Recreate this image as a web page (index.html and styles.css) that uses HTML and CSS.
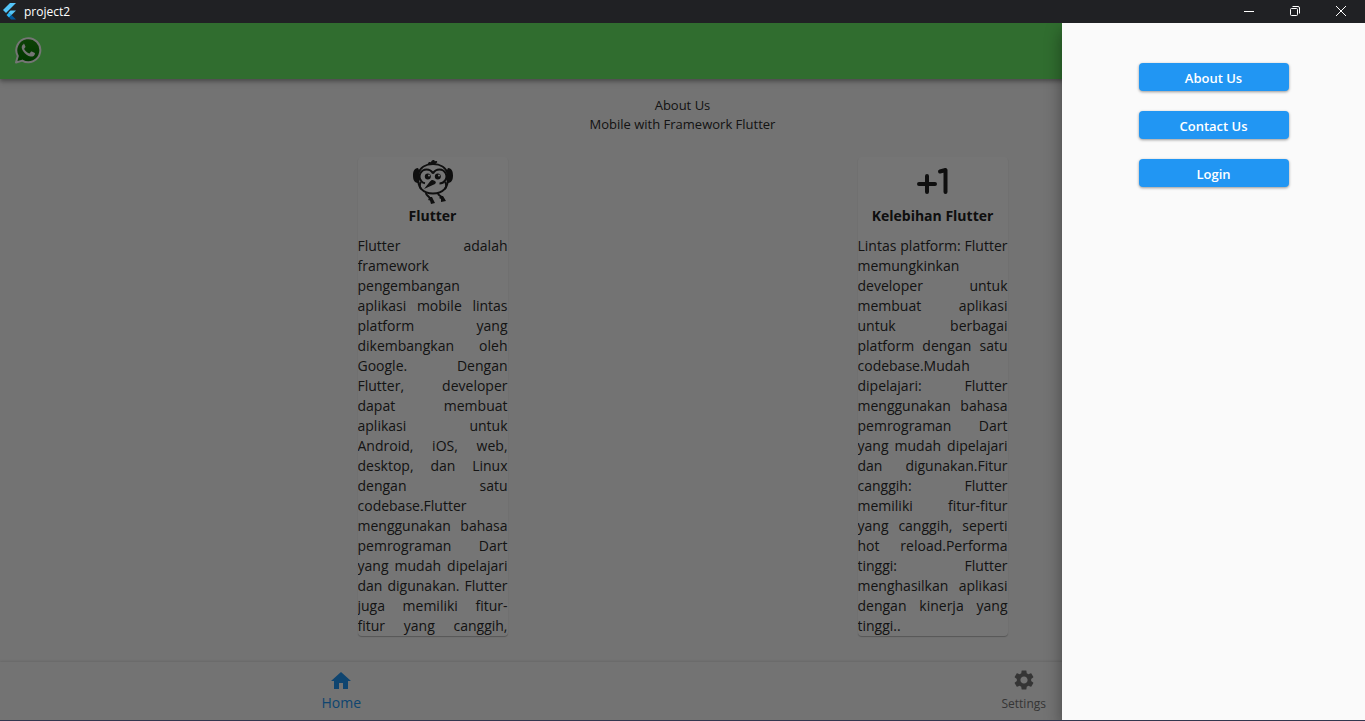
FILE: index.html
```html
<!DOCTYPE html>
<html lang="id">
<head>
<meta charset="utf-8">
<title>project2</title>
<link rel="stylesheet" href="styles.css">
</head>
<body>
<header class="titlebar">
  <svg class="titlebar-logo" viewBox="0 0 16 18" aria-hidden="true">
    <path d="M8 1h6L4 11 1 8z" fill="#54c5f8"/>
    <path d="M8.500 8.500h5.500L9.500 13 6.500 10.500z" fill="#54c5f8"/>
    <path d="M4.500 13 7 10.500 9.500 13 7 15.500z" fill="#29b6f6"/>
    <path d="M7 15.500 9.500 13 14 17.500H9z" fill="#01579b"/>
  </svg>
  <span class="titlebar-name">project2</span>
  <div class="window-controls">
    <button class="window-button" aria-label="Minimize"><svg viewBox="0 0 12 12"><path d="M1 6.500h10"/></svg></button>
    <button class="window-button" aria-label="Restore"><svg viewBox="0 0 12 12"><rect x="1.500" y="3.500" width="7" height="7" rx="1"/><path d="M3.500 1.500H9q1.500 0 1.500 1.500v5.500"/></svg></button>
    <button class="window-button" aria-label="Close"><svg viewBox="0 0 12 12"><path d="M1 1l10 10M11 1 1 11"/></svg></button>
  </div>
</header>
<div class="app">
  <div class="appbar">
    <svg class="whatsapp" viewBox="0 0 28 28" role="img" aria-label="WhatsApp">
      <defs><linearGradient id="wa" x1="0" y1="0" x2="0" y2="1"><stop offset="0" stop-color="#209010"/><stop offset="1" stop-color="#007800"/></linearGradient></defs>
      <path d="M2 26.500 3.800 20A12 12 0 1 1 8.300 24.600z" fill="url(#wa)" stroke="#fff" stroke-width="2" stroke-linejoin="round"/>
      <path d="M10.200 8c-.5 0-1.100.2-1.500.7C7 10.500 7.600 13 9.200 15.200c2 3 4.600 4.800 7.500 5.300 1.900.3 4-.8 4.200-2.600.1-.7 0-.9-.5-1.100l-2.600-1.200c-.5-.2-.8-.1-1.100.3l-1 1.300c-.3.300-.6.300-1 .1-2-.9-3.400-2.200-4.400-4-.2-.4-.1-.7.200-1l.8-1c.2-.3.200-.6.100-.9l-1.100-2.500c-.2-.4-.5-.4-1.100-.4z" fill="#fff"/>
    </svg>
  </div>
  <main class="content">
    <p class="intro">About Us<br>Mobile with Framework Flutter</p>
    <div class="cards">
      <article class="card">
        <svg class="card-icon" viewBox="0 0 48 48" aria-hidden="true">
          <g fill="none" stroke="#212121" stroke-width="2">
            <path d="M9 16C11 9.500 17 6 24 6S37 9.500 39 16"/>
            <path d="M9.500 20C8 29 14 35.500 24 35.500S40 29 38.500 20"/>
            <path d="M24 15.500c-1.500-3-4-4-6.500-4a7 7 0 0 0-5.500 11.200c1 1.500 2.500 2.300 4 2.600M24 15.500c1.500-3 4-4 6.500-4a7 7 0 0 1 5.500 11.200c-1.300 1.800-3.500 2.800-5.500 2.800"/>
            <path d="M12 24c-2 2-1 6 0 7M36 24c2 2 1 6 0 7"/>
            <path d="M17 35c0 3 3 2 4 6M29 35c0 3 3 2 4 5"/>
          </g>
          <g fill="#212121">
            <path d="M19 6c0-2 2-2.500 3-1.500 0-2 3-4 4-1 1-1 3 0 2 1l-3 2.500h-5z"/>
            <path d="M9 10C5 10 4 14 4 17.500S5 25 9 25l2-4-1-9zM39 10c4 0 5 4 5 7.500S43 25 39 25l-2-4 1-9z"/>
            <circle cx="18.800" cy="18.500" r="3"/><circle cx="28.800" cy="18.500" r="3"/>
            <path d="M25 22.500c2 1 2.500 2 1 3.500L15 31l6-7.500c1-1.500 2.500-2 4-1z"/>
            <path d="M21 39l-2 3 2 .5 1 3.500 4-1-3-6zM32 38l-2 2 2 1v3l5-1-3-5z"/>
          </g>
          <circle cx="20" cy="17.500" r="1" fill="#fff"/><circle cx="30" cy="17.500" r="1" fill="#fff"/>
        </svg>
        <h2 class="card-title">Flutter</h2>
        <p class="card-text card-text-more">Flutter adalah framework pengembangan aplikasi mobile lintas platform yang dikembangkan oleh Google. Dengan Flutter, developer dapat membuat aplikasi untuk<br>Android, iOS, web, desktop, dan Linux dengan satu codebase.Flutter menggunakan bahasa pemrograman Dart yang mudah dipelajari dan digunakan. Flutter juga memiliki fitur-<br>fitur yang canggih,</p>
      </article>
      <article class="card">
        <svg class="card-icon" viewBox="0 0 48 48" aria-hidden="true">
          <path d="M10 26h16M18 18v16M31 13.500l5.500-1.500v22" fill="none" stroke="#212121" stroke-width="4" stroke-linecap="round" stroke-linejoin="round"/>
        </svg>
        <h2 class="card-title">Kelebihan Flutter</h2>
        <p class="card-text">Lintas platform: Flutter memungkinkan developer untuk membuat aplikasi untuk berbagai platform dengan satu codebase.Mudah dipelajari: Flutter menggunakan bahasa pemrograman Dart yang mudah dipelajari dan digunakan.Fitur canggih: Flutter memiliki fitur-fitur yang canggih, seperti hot reload.Performa tinggi: Flutter menghasilkan aplikasi dengan kinerja yang tinggi..</p>
      </article>
    </div>
  </main>
  <nav class="bottom-nav">
    <button class="nav-item nav-item-active">
      <svg viewBox="0 0 24 24" aria-hidden="true"><path d="M10 20v-6h4v6h5v-8h3L12 3 2 12h3v8z"/></svg>
      <span>Home</span>
    </button>
    <button class="nav-item">
      <svg viewBox="0 0 24 24" aria-hidden="true"><path d="M19.140 12.940c.04-.3.060-.61.060-.94 0-.32-.02-.64-.07-.94l2.030-1.580c.18-.14.230-.41.120-.61l-1.920-3.320c-.12-.22-.37-.29-.59-.22l-2.390.960c-.5-.38-1.030-.7-1.620-.94l-.36-2.540c-.04-.24-.24-.41-.48-.41h-3.840c-.24 0-.43.170-.47.410l-.36 2.540c-.59.240-1.130.570-1.620.940l-2.390-.96c-.22-.08-.47 0-.59.220L2.740 8.870c-.12.210-.08.470.12.610l2.030 1.580c-.05.300-.09.630-.09.940s.02.640.07.940l-2.030 1.580c-.18.140-.23.410-.12.610l1.920 3.320c.12.220.37.290.59.220l2.390-.96c.5.380 1.030.7 1.620.940l.36 2.540c.05.240.24.410.48.410h3.840c.24 0 .44-.17.47-.41l.36-2.540c.59-.24 1.130-.56 1.620-.94l2.390.960c.22.080.47 0 .59-.22l1.920-3.320c.12-.22.070-.47-.12-.61zM12 15.600c-1.980 0-3.600-1.620-3.600-3.600s1.620-3.600 3.600-3.600 3.600 1.620 3.600 3.600-1.620 3.600-3.600 3.600z"/></svg>
      <span>Settings</span>
    </button>
  </nav>
  <div class="scrim"></div>
  <aside class="drawer">
    <button class="drawer-button">About Us</button>
    <button class="drawer-button">Contact Us</button>
    <button class="drawer-button">Login</button>
  </aside>
</div>
</body>
</html>
```
FILE: styles.css
```css
* { box-sizing: border-box; }

body {
  margin: 0;
  height: 100vh;
  display: flex;
  flex-direction: column;
  border-bottom: 1px solid #33374f;
  background: #fafafa;
  color: #2c2c2c;
  font-family: "Open Sans", "Noto Sans", sans-serif;
  font-size: 14px;
}

button { border: 0; padding: 0; background: none; font: inherit; color: inherit; }

.titlebar {
  flex: none;
  display: flex;
  align-items: center;
  height: 23px;
  padding: 0 1px 2px 2px;
  background: #202124;
  color: #fff;
  font-size: 12px;
}
.titlebar-logo { width: 16px; height: 18px; }
.titlebar-name { margin-left: 6px; padding-top: 2px; }
.window-controls { display: flex; margin-left: auto; }
.window-button {
  display: grid;
  place-items: center;
  width: 46px;
  height: 20px;
}
.window-button svg { width: 12px; height: 12px; fill: none; stroke: #fff; }

.app {
  position: relative;
  flex: 1;
  min-height: 0;
  display: flex;
  flex-direction: column;
  overflow: hidden;
}
.appbar {
  flex: none;
  z-index: 1;
  display: flex;
  align-items: center;
  height: 56px;
  padding: 0 14px 2px;
  background: #69ee67;
  box-shadow: 0 2px 4px rgba(0, 0, 0, 0.3), 0 4px 6px rgba(0, 0, 0, 0.1);
}
.whatsapp { width: 28px; height: 28px; }

.content {
  flex: 1;
  min-height: 0;
  display: flex;
  flex-direction: column;
  align-items: center;
  padding: 17px 0 26px;
}
.intro { margin: 0 0 23px; text-align: center; line-height: 19px; font-size: 13px; }
.cards { flex: 1; min-height: 0; display: flex; gap: 350px; }
.card {
  width: 150px;
  overflow: hidden;
  background: #fff;
  border-radius: 4px;
  box-shadow: 0 1px 1px rgba(0, 0, 0, 0.25);
}
.card-icon { display: block; width: 48px; height: 48px; margin: 1px auto 0; }
.card-title { margin: 0 0 10px; color: #212121; font-size: 14px; font-weight: 700; line-height: 20px; text-align: center; }
.card-text { margin: 0; line-height: 20px; text-align: justify; }
.card-text-more { text-align-last: justify; }

.bottom-nav {
  flex: none;
  display: flex;
  height: 58px;
  background: #fafafa;
  box-shadow: 0 -1px 2px rgba(0, 0, 0, 0.1);
}
.nav-item {
  flex: 1;
  display: flex;
  flex-direction: column;
  align-items: center;
  justify-content: center;
  gap: 2px;
  font-size: 12px;
  line-height: 20px;
  color: #757575;
}
.nav-item svg { width: 24px; height: 24px; fill: currentColor; }
.nav-item-active { gap: 0; color: #2196f3; font-size: 14px; }

.scrim { position: absolute; inset: 0; z-index: 2; background: rgba(0, 0, 0, 0.54); }
.drawer {
  position: absolute;
  top: 0;
  right: 0;
  bottom: 0;
  z-index: 3;
  width: 303px;
  display: flex;
  flex-direction: column;
  align-items: center;
  gap: 20px;
  padding-top: 40px;
  background: #fafafa;
  box-shadow: 0 8px 16px rgba(0, 0, 0, 0.4);
}
.drawer-button {
  width: 150px;
  height: 28px;
  padding-top: 2px;
  border-radius: 4px;
  background: #2196f3;
  color: #fff;
  font-size: 13px;
  font-weight: 600;
  box-shadow: 0 1px 3px rgba(0, 0, 0, 0.4);
}
```
